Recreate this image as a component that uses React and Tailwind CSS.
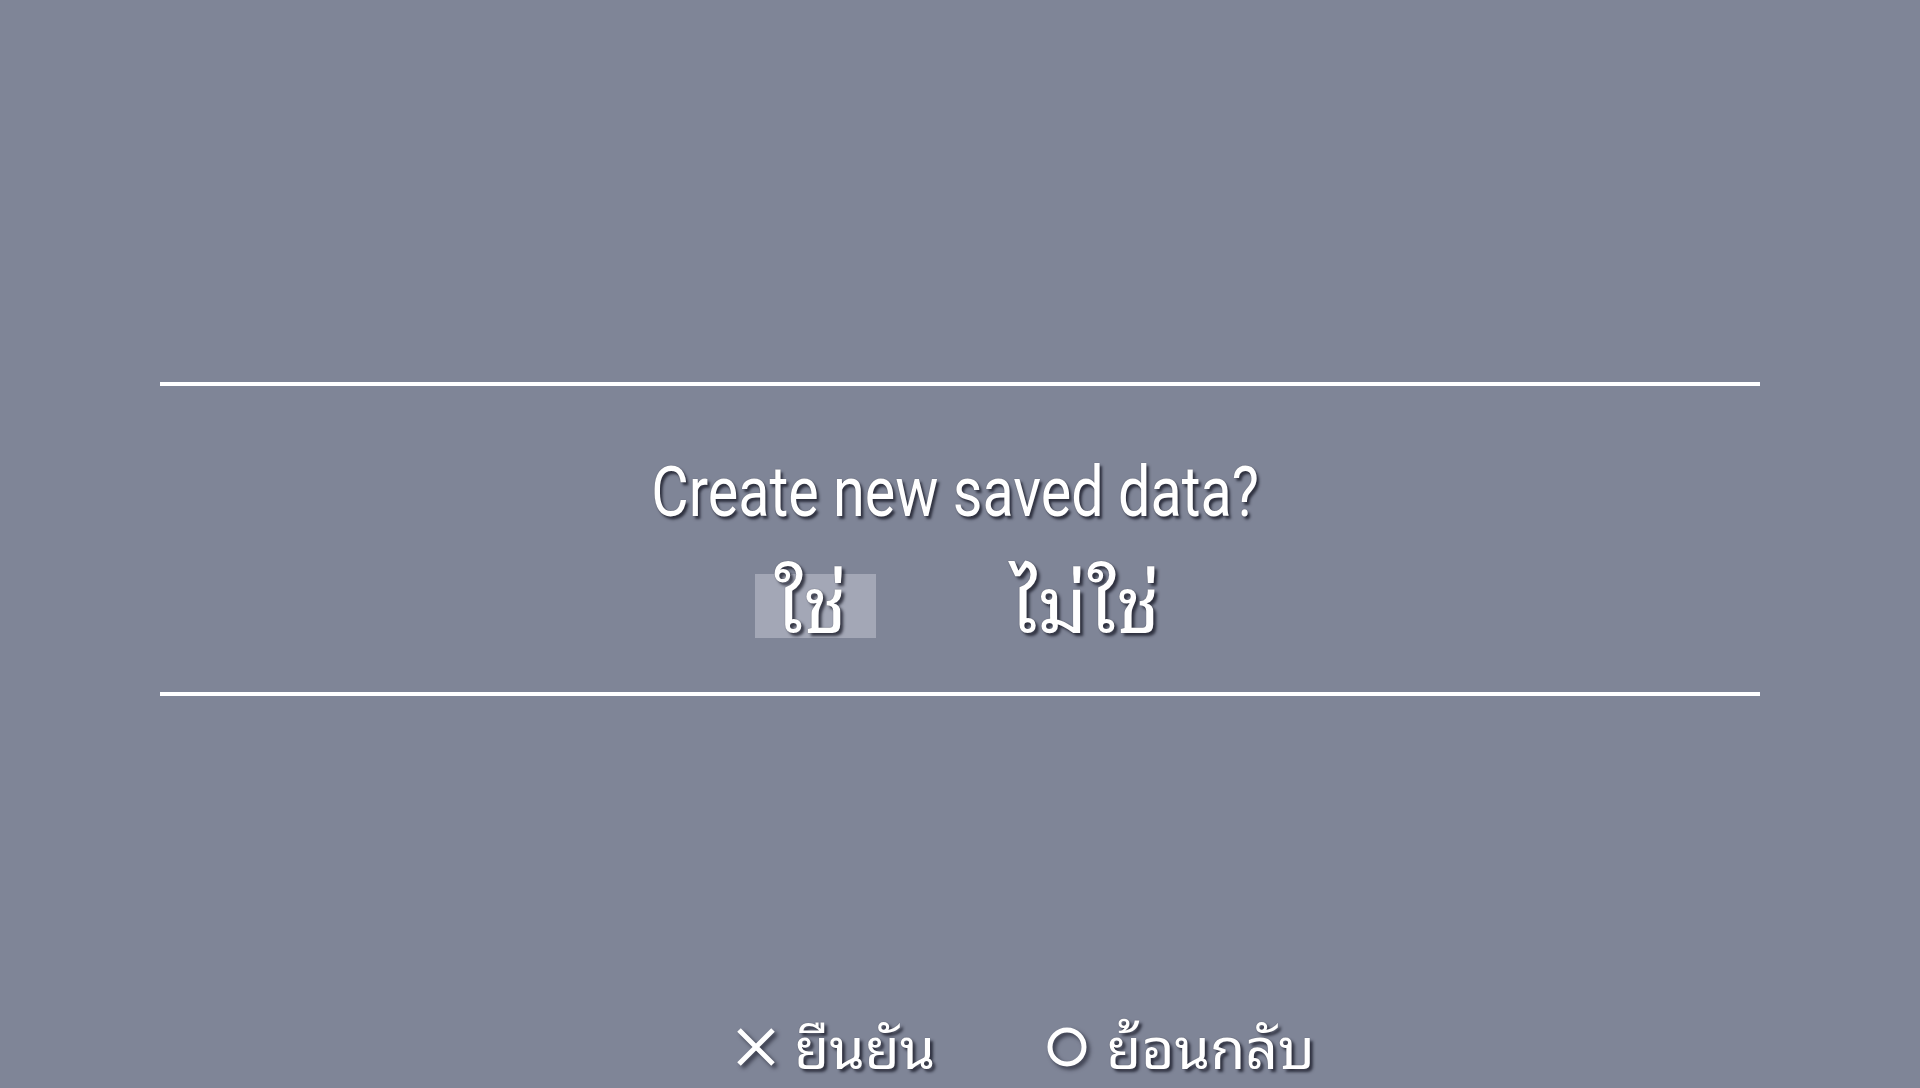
export default function App() {
  const shadow = "[text-shadow:0_0_1px_rgba(40,42,55,0.8),3px_3px_3px_rgba(20,22,35,0.75)]";
  const thai =
    "font-['Noto_Sans_Thai_Looped','Loma','Garuda','Waree','Umpush','Norasi','Kinnari','Tlwg_Typo','Noto_Sans_Thai',sans-serif]";
  return (
    <div className="w-[1920px] h-[1088px] bg-[#7f8597] overflow-hidden flex flex-col items-center font-['Roboto',sans-serif] text-white">
      <div className="h-[382px]" />
      <div className="w-[1600px] h-[4px] bg-white" />
      <div className="flex flex-col items-center h-[306px]">
        <div className={`mt-[70px] mr-[10px] text-[71px] leading-none scale-x-[0.81] whitespace-nowrap ${shadow}`}>
          Create new saved data?
        </div>
        <div className={`mt-[47px] mr-[5px] flex items-center gap-[134px] text-[78px] leading-none ${thai}`}>
          <div className={`w-[121px] h-[64px] pb-[16px] pr-[10px] bg-[#a3a7b6] flex items-center justify-center ${shadow}`}>ใช่</div>
          <div className={`w-[150px] h-[64px] pb-[16px] flex items-center justify-start ${shadow}`}>ไม่ใช่</div>
        </div>
      </div>
      <div className="w-[1600px] h-[4px] bg-white" />
      <div className="flex-1" />
      <div className={`ml-[131px] mb-[16px] flex items-center text-[57px] leading-none ${thai} ${shadow}`}>
        <div className="flex items-center gap-[18px]">
          <svg width="40" height="40" viewBox="0 0 40 40" className="mt-[6px] drop-shadow-[3px_3px_2px_rgba(20,22,35,0.7)]">
            <path d="M3 3 L37 37 M37 3 L3 37" stroke="white" strokeWidth="5" />
          </svg>
          <span>ยืนยัน</span>
        </div>
        <div className="ml-[111px] flex items-center gap-[18px]">
          <svg width="42" height="42" viewBox="0 0 42 42" className="mt-[6px] drop-shadow-[3px_3px_2px_rgba(20,22,35,0.7)]">
            <circle cx="21" cy="21" r="17" fill="none" stroke="white" strokeWidth="5" />
          </svg>
          <span>ย้อนกลับ</span>
        </div>
      </div>
    </div>
  );
}
